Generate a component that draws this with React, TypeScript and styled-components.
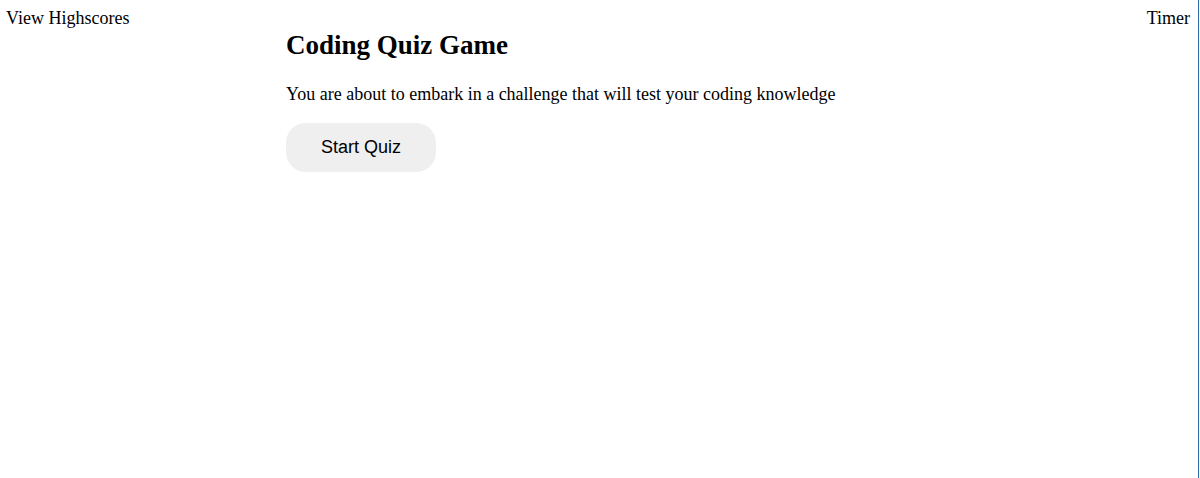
import React from "react";
import styled, { createGlobalStyle } from "styled-components";

const Global = createGlobalStyle`
  html, body { margin: 0; padding: 0; background: #fff; }
  body { font-family: "Liberation Serif", "Times New Roman", serif; color: #000; }
`;

const Page = styled.div`
  width: 1198px;
  height: 478px;
  border-right: 1px solid #2f69a6;
  box-sizing: content-box;
`;

const Header = styled.header`
  display: flex;
  justify-content: space-between;
  padding: 8px 8px 0 6px;
  font-size: 18px;
  line-height: 20px;
`;

const Main = styled.main`
  margin-left: 286px;
`;

const Title = styled.h1`
  font-size: 27px;
  font-weight: bold;
  line-height: 30px;
  margin: 2px 0 0 0;
`;

const Lead = styled.p`
  font-size: 18px;
  line-height: 20px;
  margin: 24px 0 0 0;
`;

const StartButton = styled.button`
  margin-top: 19px;
  width: 150px;
  height: 49px;
  border: none;
  border-radius: 20px;
  background: #efefef;
  font-family: "Liberation Sans", Arial, sans-serif;
  font-size: 18px;
  color: #000;
  padding: 0;
  cursor: pointer;
`;

export default function App() {
  return (
    <Page>
      <Global />
      <Header>
        <span>View Highscores</span>
        <span>Timer</span>
      </Header>
      <Main>
        <Title>Coding Quiz Game</Title>
        <Lead>You are about to embark in a challenge that will test your coding knowledge</Lead>
        <StartButton>Start Quiz</StartButton>
      </Main>
    </Page>
  );
}
